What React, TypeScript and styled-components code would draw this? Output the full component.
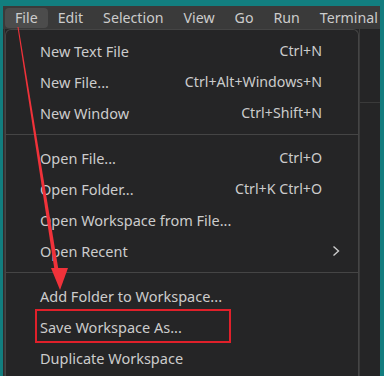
import React from "react";
import styled, { createGlobalStyle } from "styled-components";

const Global = createGlobalStyle`
  html, body { margin: 0; padding: 0; }
  body { background: #127e7f; font-family: "Noto Sans", "Open Sans", sans-serif; }
`;

const Page = styled.div`
  position: relative;
  width: 384px;
  height: 376px;
  box-sizing: border-box;
  padding: 6px 4px 0 3px;
  background: #127e7f;
  overflow: hidden;
`;

const Window = styled.div`
  display: flex;
  flex-direction: column;
  height: 100%;
  background: #252526;
`;

const MenuBar = styled.div`
  display: flex;
  align-items: center;
  height: 23px;
  padding-left: 2px;
  background: #3a3a3a;
  overflow: hidden;
`;

const MenuTitle = styled.div<{ $active?: boolean }>`
  height: 20px;
  padding: 0 10px;
  display: flex;
  align-items: center;
  border-radius: 4px;
  font-size: 14.2px;
  color: #cccccc;
  background: ${(p) => (p.$active ? "#4c4c4c" : "transparent")};
  white-space: nowrap;
`;

const Body = styled.div`
  flex: 1;
  display: flex;
  min-height: 0;
`;

const LeftStrip = styled.div`
  width: 1px;
  background: #2c2c2c;
  border-right: 1px solid #3a3a3a;
`;

const Menu = styled.div`
  width: 354px;
  box-sizing: border-box;
  background: #252526;
  border: 1px solid #454545;
  border-bottom: none;
  border-radius: 6px 6px 0 0;
  padding-top: 5px;
  display: flex;
  flex-direction: column;
`;

const SidePanel = styled.div`
  flex: 1;
  display: flex;
  flex-direction: column;
  border-left: 1px solid #3a3a3a;
  background: #252526;
`;

const SideTop = styled.div`
  height: 73px;
  border-bottom: 1px solid #3a3a3a;
`;

const Item = styled.div<{ $marked?: boolean }>`
  position: relative;
  height: 31px;
  display: flex;
  align-items: center;
  padding: 0 20px 0 34px;
  font-size: 14.5px;
  color: #cccccc;
  white-space: nowrap;
  &::before {
    content: "";
    display: ${(p) => (p.$marked ? "block" : "none")};
    position: absolute;
    left: 29px;
    top: -2px;
    width: 192px;
    height: 30px;
    border: 2px solid #e0202a;
  }
`;

const Label = styled.span`
  flex: 1;
`;

const Shortcut = styled.span`
  margin-right: 16px;
  font-size: 14.2px;
`;

const Chevron = styled.svg`
  width: 10px;
  height: 12px;
  margin-right: -3px;
`;

const Separator = styled.div`
  height: 1px;
  background: #454545;
  margin: 6px 0 7px;
`;

const Arrow = styled.svg`
  position: absolute;
  left: 0;
  top: 0;
  pointer-events: none;
`;

type Entry =
  | { label: string; shortcut?: string; sub?: boolean; marked?: boolean }
  | "sep";

const entries: Entry[] = [
  { label: "New Text File", shortcut: "Ctrl+N" },
  { label: "New File...", shortcut: "Ctrl+Alt+Windows+N" },
  { label: "New Window", shortcut: "Ctrl+Shift+N" },
  "sep",
  { label: "Open File...", shortcut: "Ctrl+O" },
  { label: "Open Folder...", shortcut: "Ctrl+K Ctrl+O" },
  { label: "Open Workspace from File..." },
  { label: "Open Recent", sub: true },
  "sep",
  { label: "Add Folder to Workspace..." },
  { label: "Save Workspace As...", marked: true },
  { label: "Duplicate Workspace" },
];

const titles = ["File", "Edit", "Selection", "View", "Go", "Run", "Terminal"];

export default function App() {
  return (
    <>
      <Global />
      <Page>
        <Window>
          <MenuBar>
            {titles.map((t, i) => (
              <MenuTitle key={t} $active={i === 0}>
                {t}
              </MenuTitle>
            ))}
          </MenuBar>
          <Body>
            <LeftStrip />
            <Menu>
              {entries.map((e, i) =>
                e === "sep" ? (
                  <Separator key={i} />
                ) : (
                  <Item key={i} $marked={e.marked}>
                    <Label>{e.label}</Label>
                    {e.shortcut && <Shortcut>{e.shortcut}</Shortcut>}
                    {e.sub && (
                      <Chevron viewBox="0 0 10 12">
                        <path d="M2.5 1.5 L7.5 6 L2.5 10.5" fill="none" stroke="#cccccc" strokeWidth="1.4" />
                      </Chevron>
                    )}
                  </Item>
                )
              )}
            </Menu>
            <SidePanel>
              <SideTop />
            </SidePanel>
          </Body>
        </Window>
        <Arrow width="384" height="376" viewBox="0 0 384 376">
          <polygon points="17.5,27 18.5,27 58.5,270 54.5,270" fill="#f0323a" />
          <polygon points="51,268 68,268 60,290" fill="#f0323a" />
        </Arrow>
      </Page>
    </>
  );
}
